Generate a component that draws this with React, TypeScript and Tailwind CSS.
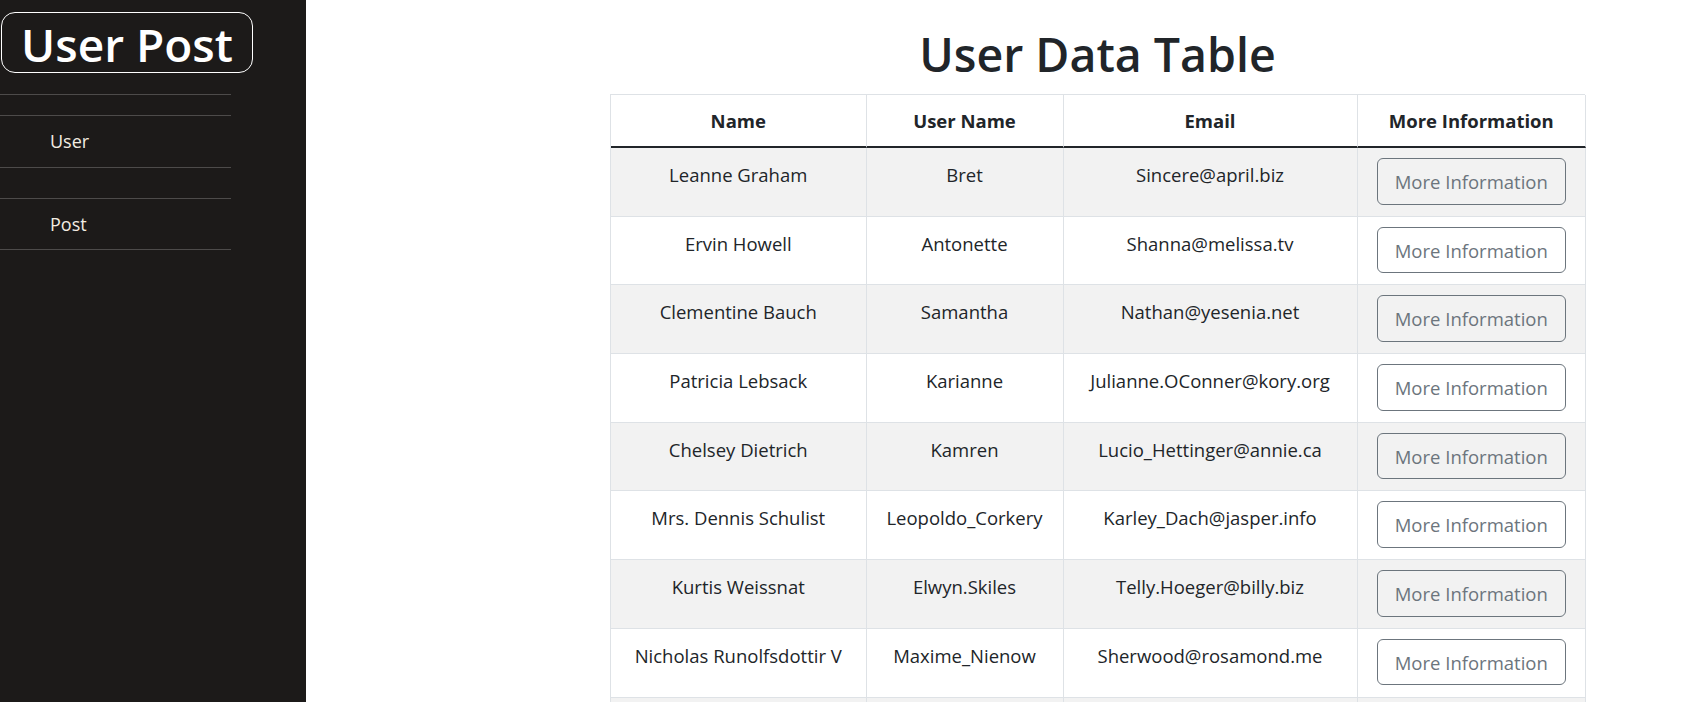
import React from "react";

const users = [
  ["Leanne Graham", "Bret", "Sincere@april.biz"],
  ["Ervin Howell", "Antonette", "Shanna@melissa.tv"],
  ["Clementine Bauch", "Samantha", "Nathan@yesenia.net"],
  ["Patricia Lebsack", "Karianne", "Julianne.OConner@kory.org"],
  ["Chelsey Dietrich", "Kamren", "Lucio_Hettinger@annie.ca"],
  ["Mrs. Dennis Schulist", "Leopoldo_Corkery", "Karley_Dach@jasper.info"],
  ["Kurtis Weissnat", "Elwyn.Skiles", "Telly.Hoeger@billy.biz"],
  ["Nicholas Runolfsdottir V", "Maxime_Nienow", "Sherwood@rosamond.me"],
  ["Glenna Reichert", "Delphine", "Chaim_McDermott@dana.io"],
  ["Clementina DuBuque", "Moriah.Stanton", "Rey.Padberg@karina.biz"],
];

export default function App() {
  return (
    <div className="flex h-screen overflow-hidden bg-white font-['Open_Sans','Noto_Sans',sans-serif] text-[#212529]">
      <aside className="w-[306px] shrink-0 bg-[#1c1a19]">
        <div className="ml-px mt-[12px] w-[252px] h-[61px] rounded-[14px] border border-white text-center text-[46px] font-semibold text-white leading-[56px] pt-[3px]">
          User Post
        </div>
        <div className="mt-[21px] w-[231px] border-t border-[#4d4b4a]" />
        <ul className="w-[231px]">
          <li className="mt-[20px] h-[53px] border-y border-[#4d4b4a] pl-[50px] text-[18px] leading-[51px] text-[#f3ede2]">
            User
          </li>
          <li className="mt-[30px] h-[52px] border-y border-[#4d4b4a] pl-[50px] text-[18px] leading-[50px] text-[#f3ede2]">
            Post
          </li>
        </ul>
      </aside>
      <main className="flex-1 pl-[304px]">
        <div className="w-[975px]">
          <h1 className="mt-[29px] mb-[14px] h-[51px] text-center text-[46.5px] font-semibold leading-[50px] text-[#212529] whitespace-nowrap">
            User Data Table
          </h1>
          <div className="grid grid-cols-[255.5px_197px_294px_228.5px] border-t border-l border-[#dee2e6] text-[18.5px] leading-[27.6px]">
            {["Name", "User Name", "Email", "More Information"].map((h) => (
              <div
                key={h}
                className="h-[53px] border-r border-[#dee2e6] border-b-2 border-b-[#212529] pt-[12px] text-center font-bold"
              >
                {h}
              </div>
            ))}
            {users.map((u, i) => {
              const bg = i % 2 === 0 ? "bg-[#f2f2f2]" : "bg-white";
              return (
                <React.Fragment key={i}>
                  {u.map((c, j) => (
                    <div
                      key={j}
                      className={`${bg} h-[68.7px] border-r border-b border-[#dee2e6] pt-[13px] text-center whitespace-nowrap`}
                    >
                      {c}
                    </div>
                  ))}
                  <div className={`${bg} h-[68.7px] border-r border-b border-[#dee2e6] pt-[10px] flex justify-center items-start`}>
                    <button className="rounded-[6px] border border-[#6c757d] px-[17px] pt-[9px] pb-[8px] text-[#6c757d] leading-[27.6px]">
                      More Information
                    </button>
                  </div>
                </React.Fragment>
              );
            })}
          </div>
        </div>
      </main>
    </div>
  );
}
